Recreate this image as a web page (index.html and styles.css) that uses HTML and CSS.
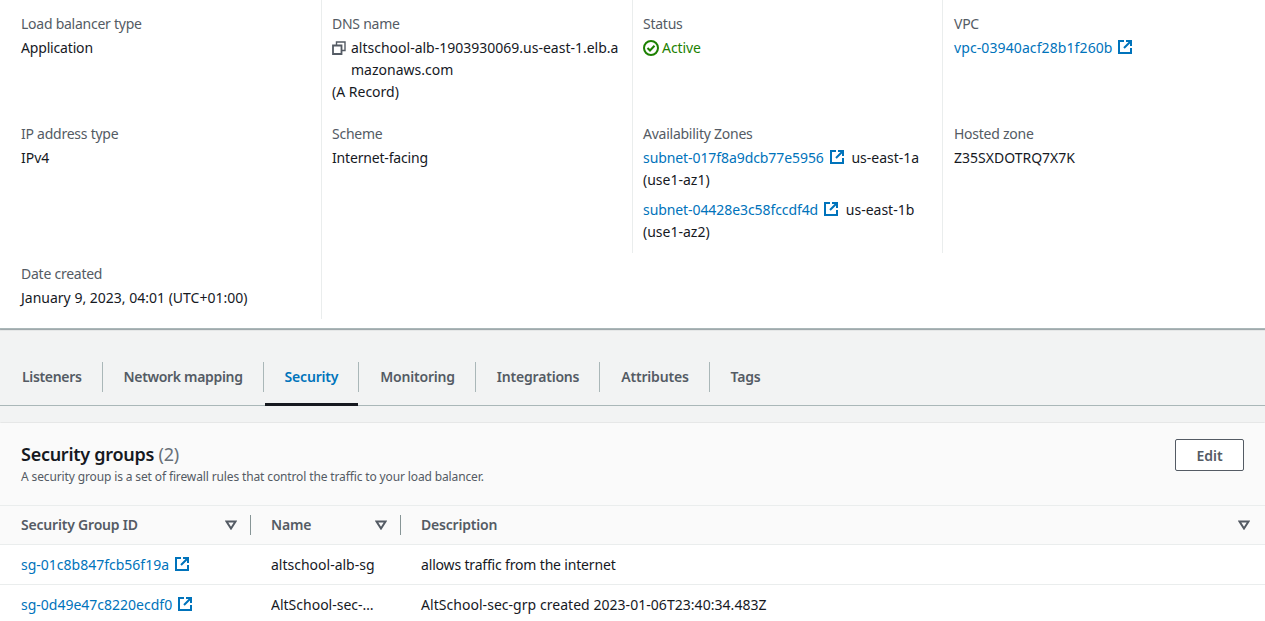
FILE: index.html
```html
<!DOCTYPE html>
<html lang="en">
<head>
    <meta charset="UTF-8">
    <title>Load balancer details</title>
    <link rel="stylesheet" href="styles.css">
</head>
<body>
    <svg class="sprite" width="0" height="0">
        <symbol id="icon-external" viewBox="0 0 16 16">
            <path d="M7 2H2v12h12V9" fill="none" stroke="currentColor" stroke-width="2" />
            <path d="M9 2h5v5M14 2L7 9" fill="none" stroke="currentColor" stroke-width="2" />
        </symbol>
        <symbol id="icon-sort" viewBox="0 0 12 10">
            <path d="M1.500 1.500h9L6 8.500z" fill="none" stroke="currentColor" stroke-width="2" stroke-linejoin="miter" />
        </symbol>
    </svg>

    <section class="summary">
        <div class="cell">
            <div class="label">Load balancer type</div>
            <div class="value tight">Application</div>
        </div>
        <div class="cell">
            <div class="label">DNS name</div>
            <div class="value dns">
                <svg class="copy-icon" viewBox="0 0 14 14">
                    <path d="M1 4.500h8.500V13H1z" fill="none" stroke="currentColor" stroke-width="1.800" />
                    <path d="M4.500 4V1H13v8.500h-3" fill="none" stroke="currentColor" stroke-width="1.400" />
                </svg>
                <span class="dns-text">altschool-alb-1903930069.us-east-1.elb.amazonaws.com</span>
            </div>
            <div class="value">(A Record)</div>
        </div>
        <div class="cell">
            <div class="label">Status</div>
            <div class="value status">
                <svg class="status-icon" viewBox="0 0 16 16">
                    <circle cx="8" cy="8" r="7" fill="none" stroke="currentColor" stroke-width="2" />
                    <path d="M4.500 8l2.500 2.500 4.500-4.700" fill="none" stroke="currentColor" stroke-width="2" />
                </svg>
                Active
            </div>
        </div>
        <div class="cell cell-last">
            <div class="label">VPC</div>
            <div class="value"><a class="link link-vpc" href="#">vpc-03940acf28b1f260b<svg class="ext"><use href="#icon-external" /></svg></a></div>
        </div>

        <div class="cell">
            <div class="label">IP address type</div>
            <div class="value">IPv4</div>
        </div>
        <div class="cell cell-end">
            <div class="label">Scheme</div>
            <div class="value tight">Internet-facing</div>
        </div>
        <div class="cell cell-end">
            <div class="label">Availability Zones</div>
            <div class="zone">
                <a class="link link-zone" href="#">subnet-017f8a9dcb77e5956<svg class="ext"><use href="#icon-external" /></svg></a>
                <span class="zone-name">us-east-1a (use1-az1)</span>
            </div>
            <div class="zone">
                <a class="link link-zone" href="#">subnet-04428e3c58fccdf4d<svg class="ext"><use href="#icon-external" /></svg></a>
                <span class="zone-name">us-east-1b (use1-az2)</span>
            </div>
        </div>
        <div class="cell cell-last">
            <div class="label">Hosted zone</div>
            <div class="value">Z35SXDOTRQ7X7K</div>
        </div>

        <div class="cell cell-bottom">
            <div class="label">Date created</div>
            <div class="value">January 9, 2023, 04:01 (UTC+01:00)</div>
        </div>
    </section>

    <nav class="tabs">
        <a class="tab" href="#">Listeners</a>
        <a class="tab" href="#">Network mapping</a>
        <a class="tab tab-active" href="#">Security</a>
        <a class="tab" href="#">Monitoring</a>
        <a class="tab" href="#">Integrations</a>
        <a class="tab" href="#">Attributes</a>
        <a class="tab" href="#">Tags</a>
    </nav>

    <section class="panel">
        <header class="panel-head">
            <div>
                <h2>Security groups <span class="count">(2)</span></h2>
                <p>A security group is a set of firewall rules that control the traffic to your load balancer.</p>
            </div>
            <button class="btn">Edit</button>
        </header>
        <table class="groups">
            <thead>
                <tr>
                    <th class="col-id"><div class="th-inner">Security Group ID<svg class="sort"><use href="#icon-sort" /></svg></div></th>
                    <th class="col-name"><div class="th-inner">Name<svg class="sort"><use href="#icon-sort" /></svg></div></th>
                    <th><div class="th-inner th-last">Description<svg class="sort"><use href="#icon-sort" /></svg></div></th>
                </tr>
            </thead>
            <tbody>
                <tr>
                    <td><a class="link" href="#">sg-01c8b847fcb56f19a<svg class="ext"><use href="#icon-external" /></svg></a></td>
                    <td>altschool-alb-sg</td>
                    <td class="tight">allows traffic from the internet</td>
                </tr>
                <tr>
                    <td><a class="link" href="#">sg-0d49e47c8220ecdf0<svg class="ext"><use href="#icon-external" /></svg></a></td>
                    <td><div class="clip">AltSchool-sec-grp</div></td>
                    <td class="wide">AltSchool-sec-grp created 2023-01-06T23:40:34.483Z</td>
                </tr>
            </tbody>
        </table>
    </section>
</body>
</html>
```

FILE: styles.css
```css
html, body {
    height: 621px;
    overflow: hidden;
}
body {
    font-family: "Noto Sans", Arial, sans-serif;
    font-size: 14px;
    line-height: 22px;
    color: #16191f;
    background-color: #f2f3f3;
    margin: 0;
}
.sprite {
    position: absolute;
}
a {
    text-decoration: none;
}
.link {
    color: #0073bb;
}
.link-vpc {
    letter-spacing: 0.1px;
}
.link-vpc .ext {
    margin-left: 4px;
}
.link-zone {
    letter-spacing: -0.08px;
}
.tight {
    letter-spacing: -0.17px;
}
.wide {
    letter-spacing: 0.04px;
}
.ext {
    width: 16px;
    height: 16px;
    margin-left: 5px;
    vertical-align: -2px;
}

/* top details card */
.summary {
    display: grid;
    grid-template-columns: 321px 311px 310px 1fr;
    height: 329px;
    box-sizing: border-box;
    padding: 13px 0 0 1px;
    background-color: #fff;
    border-bottom: 1px solid #aab7b8;
    box-shadow: 0 1px 1px rgba(0, 28, 36, 0.3), 1px 0 1px rgba(0, 28, 36, 0.15), -1px 0 1px rgba(0, 28, 36, 0.15);
    align-content: start;
}
.cell {
    padding: 0 10px 20px 10px;
    border-right: 1px solid #eaeded;
}
.cell:nth-child(4n+1) {
    padding-left: 20px;
}
.cell:nth-child(-n+4) {
    margin-top: -13px;
    padding-top: 13px;
}
.cell-last {
    border-right: none;
    padding-left: 11px;
}
.cell-end {
    padding-bottom: 10px;
    margin-bottom: 10px;
}
.cell-bottom {
    padding-bottom: 10px;
}
.label {
    color: #545b64;
    margin-bottom: 2px;
    letter-spacing: -0.25px;
}
.dns {
    display: flex;
    gap: 5px;
}
.copy-icon {
    flex: none;
    width: 14px;
    height: 14px;
    margin-top: 4px;
    color: #545b64;
}
.dns-text {
    word-break: break-all;
}
.status {
    color: #1d8102;
    letter-spacing: -0.1px;
}
.status-icon {
    width: 16px;
    height: 16px;
    margin-right: -0.5px;
    vertical-align: -3px;
}
.zone + .zone {
    margin-top: 8px;
}
.zone-name {
    margin-left: 3px;
}

/* tabs */
.tabs {
    display: flex;
    align-items: stretch;
    height: 56px;
    margin-top: 20px;
    padding-left: 1px;
    border-bottom: 1px solid #aab7b8;
    box-sizing: content-box;
}
.tab {
    position: relative;
    display: flex;
    align-items: center;
    padding: 0 20px 0 22px;
    color: #545b64;
    font-weight: 600;
    letter-spacing: -0.2px;
}
.tab:nth-child(-n+2) {
    letter-spacing: -0.33px;
}
.tab:first-child {
    padding-left: 21px;
}
.tab + .tab::before {
    content: "";
    position: absolute;
    left: 0;
    top: 13px;
    height: 30px;
    width: 1px;
    background-color: #aab7b8;
}
.tab-active {
    color: #0073bb;
}
.tab-active::after {
    content: "";
    position: absolute;
    left: 2px;
    right: 0;
    bottom: -1px;
    height: 3px;
    background-color: #16191f;
}

/* security groups */
.panel {
    margin-top: 17px;
    background-color: #fff;
    box-shadow: 0 1px 1px rgba(0, 28, 36, 0.3), 1px 0 1px rgba(0, 28, 36, 0.15), -1px 0 1px rgba(0, 28, 36, 0.15);
}
.panel-head {
    display: flex;
    justify-content: space-between;
    align-items: flex-start;
    height: 83px;
    box-sizing: border-box;
    padding: 16px 21px 0 21px;
    background-color: #fafafa;
    border-bottom: 1px solid #eaeded;
}
.panel-head h2 {
    margin: 3px 0 0;
    font-size: 18px;
    line-height: 24px;
    font-weight: 600;
    letter-spacing: -0.27px;
}
.count {
    color: #687078;
    font-weight: 400;
}
.panel-head p {
    margin: 0;
    font-size: 12px;
    line-height: 22px;
    color: #545b64;
    letter-spacing: -0.13px;
}
.btn {
    width: 69px;
    height: 32px;
    border: 1px solid #545b64;
    border-radius: 2px;
    background-color: #fff;
    color: #545b64;
    font-family: inherit;
    font-size: 14px;
    font-weight: 600;
    padding: 0;
}
.groups {
    width: 100%;
    table-layout: fixed;
    border-collapse: collapse;
}
.col-id {
    width: 251px;
}
.col-name {
    width: 150px;
}
.groups th {
    height: 38px;
    padding: 0;
    text-align: left;
    color: #545b64;
    font-weight: 600;
    letter-spacing: -0.2px;
    background-color: #fafafa;
    border-bottom: 1px solid #eaeded;
}
.th-inner {
    display: flex;
    align-items: center;
    justify-content: space-between;
    height: 20px;
    padding: 0 13px 0 20px;
    border-right: 1px solid #879596;
}
.col-id .th-inner {
    padding-left: 21px;
}
.th-last {
    border-right: none;
    padding-right: 15px;
}
.sort {
    width: 12px;
    height: 10px;
    color: #545b64;
}
.groups td {
    height: 39px;
    padding: 0 0 0 20px;
    border-bottom: 1px solid #eaeded;
}
.groups td:first-child {
    padding-left: 21px;
}
.clip {
    width: 108px;
    overflow: hidden;
    white-space: nowrap;
    text-overflow: ellipsis;
}
```
